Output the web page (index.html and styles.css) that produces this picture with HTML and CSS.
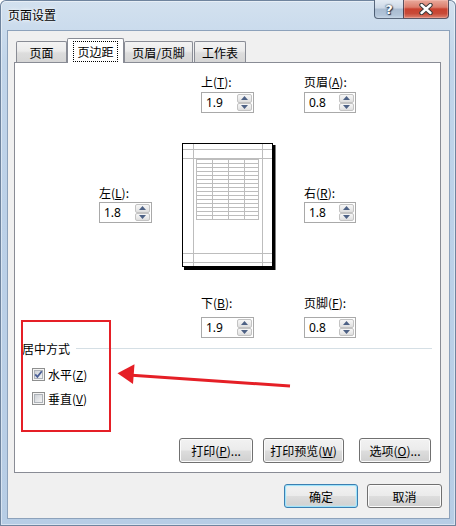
FILE: index.html
```html
<!DOCTYPE html>
<html>
<head>
<meta charset="utf-8">
<title>页面设置</title>
<link rel="stylesheet" href="styles.css">
</head>
<body>
<div class="window">
  <div class="titlebar">
    <div class="title">页面设置</div>
    <div class="caption-btns">
      <div class="cap help">?</div>
      <div class="cap close">
        <svg width="14" height="12" viewBox="0 0 14 12">
          <path d="M2.5 2 L11.5 10 M11.5 2 L2.5 10" stroke="#3b3b3b" stroke-width="4.4" stroke-linecap="round"/>
          <path d="M2.5 2 L11.5 10 M11.5 2 L2.5 10" stroke="#ffffff" stroke-width="2.4" stroke-linecap="round"/>
        </svg>
      </div>
    </div>
  </div>
  <div class="client">
    <div class="tabs">
      <div class="tab t1">页面</div>
      <div class="tab t2 active"><span class="focus">页边距</span></div>
      <div class="tab t3">页眉/页脚</div>
      <div class="tab t4">工作表</div>
    </div>
    <div class="panel">
      <div class="margins">
        <div class="field f-top">
          <div class="flabel">上(<u>T</u>):</div>
          <div class="spin"><span class="spin-val">1.9</span><span class="spin-btns"><span class="sb"><svg width="7" height="4" viewBox="0 0 7 4"><polygon points="0,4 3.5,0 7,4" fill="#4d6185"/></svg></span><span class="sb"><svg width="7" height="4" viewBox="0 0 7 4"><polygon points="0,0 3.5,4 7,0" fill="#4d6185"/></svg></span></span></div>
        </div>
        <div class="field f-header">
          <div class="flabel">页眉(<u>A</u>):</div>
          <div class="spin"><span class="spin-val">0.8</span><span class="spin-btns"><span class="sb"><svg width="7" height="4" viewBox="0 0 7 4"><polygon points="0,4 3.5,0 7,4" fill="#4d6185"/></svg></span><span class="sb"><svg width="7" height="4" viewBox="0 0 7 4"><polygon points="0,0 3.5,4 7,0" fill="#4d6185"/></svg></span></span></div>
        </div>
        <div class="field f-left">
          <div class="flabel">左(<u>L</u>):</div>
          <div class="spin"><span class="spin-val">1.8</span><span class="spin-btns"><span class="sb"><svg width="7" height="4" viewBox="0 0 7 4"><polygon points="0,4 3.5,0 7,4" fill="#4d6185"/></svg></span><span class="sb"><svg width="7" height="4" viewBox="0 0 7 4"><polygon points="0,0 3.5,4 7,0" fill="#4d6185"/></svg></span></span></div>
        </div>
        <svg class="preview" width="94" height="128" viewBox="0 0 94 128">
          <rect x="2" y="2" width="91.5" height="125" fill="#000"/>
          <rect x="0.5" y="0.5" width="90" height="123" fill="#fff" stroke="#000" stroke-width="1"/>
          <g stroke="#bdbdbd" stroke-width="1" fill="none">
            <path d="M11.5 1 V123 M80.5 1 V123 M1 6.5 H90 M1 15.5 H90 M1 110.5 H90 M1 119.5 H90"/>
            <path d="M14.5 16 V76 M30.5 16 V76 M46.5 16 V76 M62.5 16 V76 M76.5 16 V76"/>
            <path d="M14 16.5 H77 M14 20.5 H77 M14 24.5 H77 M14 28.5 H77 M14 32.5 H77 M14 36.5 H77 M14 40.5 H77 M14 44.5 H77 M14 48.5 H77 M14 52.5 H77 M14 56.5 H77 M14 60.5 H77 M14 64.5 H77 M14 68.5 H77 M14 72.5 H77 M14 76.5 H77"/>
          </g>
        </svg>
        <div class="field f-right">
          <div class="flabel">右(<u>R</u>):</div>
          <div class="spin"><span class="spin-val">1.8</span><span class="spin-btns"><span class="sb"><svg width="7" height="4" viewBox="0 0 7 4"><polygon points="0,4 3.5,0 7,4" fill="#4d6185"/></svg></span><span class="sb"><svg width="7" height="4" viewBox="0 0 7 4"><polygon points="0,0 3.5,4 7,0" fill="#4d6185"/></svg></span></span></div>
        </div>
        <div class="field f-bottom">
          <div class="flabel">下(<u>B</u>):</div>
          <div class="spin"><span class="spin-val">1.9</span><span class="spin-btns"><span class="sb"><svg width="7" height="4" viewBox="0 0 7 4"><polygon points="0,4 3.5,0 7,4" fill="#4d6185"/></svg></span><span class="sb"><svg width="7" height="4" viewBox="0 0 7 4"><polygon points="0,0 3.5,4 7,0" fill="#4d6185"/></svg></span></span></div>
        </div>
        <div class="field f-footer">
          <div class="flabel">页脚(<u>F</u>):</div>
          <div class="spin"><span class="spin-val">0.8</span><span class="spin-btns"><span class="sb"><svg width="7" height="4" viewBox="0 0 7 4"><polygon points="0,4 3.5,0 7,4" fill="#4d6185"/></svg></span><span class="sb"><svg width="7" height="4" viewBox="0 0 7 4"><polygon points="0,0 3.5,4 7,0" fill="#4d6185"/></svg></span></span></div>
        </div>
      </div>
      <div class="group">
        <div class="group-head"><span class="group-title">居中方式</span><span class="rule"></span></div>
        <div class="check c1">
          <svg class="cbox" width="13" height="13" viewBox="0 0 13 13">
            <defs><linearGradient id="cg1" x1="0" y1="0" x2="1" y2="1"><stop offset="0" stop-color="#cbcfd5"/><stop offset="1" stop-color="#f6f6f6"/></linearGradient></defs>
            <rect x="0.5" y="0.5" width="12" height="12" fill="#f4f4f4" stroke="#8e8f8f"/>
            <rect x="2.5" y="2.5" width="8" height="8" fill="url(#cg1)" stroke="#aeb3b9"/>
            <path d="M3.2 6.4 L5.4 8.8 L9.8 3.2" fill="none" stroke="#4a5f97" stroke-width="1.8"/>
          </svg>
          <span>水平(<u>Z</u>)</span>
        </div>
        <div class="check c2">
          <svg class="cbox" width="13" height="13" viewBox="0 0 13 13">
            <defs><linearGradient id="cg2" x1="0" y1="0" x2="1" y2="1"><stop offset="0" stop-color="#cbcfd5"/><stop offset="1" stop-color="#f6f6f6"/></linearGradient></defs>
            <rect x="0.5" y="0.5" width="12" height="12" fill="#f4f4f4" stroke="#8e8f8f"/>
            <rect x="2.5" y="2.5" width="8" height="8" fill="url(#cg2)" stroke="#aeb3b9"/>
          </svg>
          <span>垂直(<u>V</u>)</span>
        </div>
      </div>
      <div class="print-row">
        <button class="btn b-print">打印(<u>P</u>)...</button>
        <button class="btn b-preview">打印预览(<u>W</u>)</button>
        <button class="btn b-options">选项(<u>O</u>)...</button>
      </div>
    </div>
    <div class="dlg-row">
      <button class="btn default b-ok">确定</button>
      <button class="btn b-cancel">取消</button>
    </div>
  </div>
  <div class="annot-box"></div>
  <svg class="annot-arrow" width="456" height="526" viewBox="0 0 456 526">
    <path d="M132 375.2 L290 386" stroke="#e51f26" stroke-width="3" fill="none"/>
    <polygon points="117.5,373.3 134.5,364.3 133,384" fill="#e51f26"/>
  </svg>
</div>
</body>
</html>
```

FILE: styles.css
```css
* { box-sizing: border-box; }
html, body { margin: 0; padding: 0; }
body {
  width: 456px;
  height: 526px;
  overflow: hidden;
  font-family: "Noto Sans", "Noto Sans CJK SC", sans-serif;
  font-size: 12px;
  color: #000;
  background: #ffffff;
}
u { text-decoration: underline; text-underline-offset: 1px; }

.window {
  position: relative;
  width: 456px;
  height: 526px;
  border-radius: 6px 6px 0 0;
  background: linear-gradient(180deg, #d3e1ef 0%, #c1d5ea 12%, #bcd1e8 40%, #b7cde5 100%);
  box-shadow: inset 0 0 0 1px #6f849e, inset 0 0 0 2px rgba(255,255,255,0.45);
  overflow: hidden;
}

.titlebar {
  height: 30px;
  display: flex;
  align-items: flex-start;
  justify-content: space-between;
}
.title {
  margin-left: 8px;
  line-height: 30px;
  font-family: "Noto Sans CJK SC", sans-serif;
  font-size: 12px;
  text-shadow: 0 0 5px rgba(255,255,255,0.95), 0 0 2px rgba(255,255,255,0.9);
}
.caption-btns {
  display: flex;
  margin-right: 7px;
}
.cap {
  height: 19px;
  display: flex;
  align-items: center;
  justify-content: center;
  border: 1px solid rgba(45,60,85,0.75);
  border-top: none;
}
.help {
  width: 29px;
  border-radius: 0 0 0 4px;
  border-right: none;
  background: linear-gradient(180deg, #e3ebf4 0%, #ccd8e6 45%, #a9bbd0 50%, #b3c5d9 85%, #c7d6e6 100%);
  color: #fff;
  font-family: "DejaVu Sans", sans-serif;
  font-weight: bold;
  font-size: 13px;
  line-height: 19px;
  text-shadow: 0 0 1px #2b3a52, 0 0 2px #2b3a52, 1px 1px 1px #2b3a52;
}
.close {
  width: 46px;
  border-radius: 0 0 4px 0;
  background: linear-gradient(180deg, #e9aa9c 0%, #dc7d6c 40%, #c9412f 50%, #c84a38 75%, #dc8270 100%);
  box-shadow: inset 0 0 0 1px rgba(255,210,200,0.35);
}
.close svg { display: block; }

.client {
  margin: 0 6px 0 7px;
  height: 489px;
  background: #f0f0f0;
  border: 1px solid #8da2bb;
  padding: 7px 8px 0 6px;
}

.tabs {
  display: flex;
  align-items: flex-end;
  height: 24px;
  padding-left: 2px;
  font-family: "Noto Sans CJK SC", sans-serif;
}
.tab {
  height: 21px;
  border: 1px solid #898c95;
  border-bottom: none;
  border-radius: 2px 2px 0 0;
  background: linear-gradient(180deg, #f3f3f3 0%, #ebebeb 45%, #dddddd 55%, #d6d6d6 100%);
  display: flex;
  align-items: center;
  justify-content: center;
  line-height: 15px;
}
.t1 { width: 51px; }
.t2 { width: 57px; }
.t3 { width: 69px; }
.t4 { width: 52px; margin-left: 1px; }
.tab.active {
  height: 25px;
  margin-bottom: -1px;
  background: #ffffff;
  position: relative;
  z-index: 1;
}
.focus {
  outline: 1px dotted #000;
  outline-offset: 0;
  padding: 2px 3px 2px 3px;
  line-height: 15px;
}

.panel {
  height: 411px;
  width: 427px;
  border: 1px solid #898c95;
  background: #ffffff;
  font-family: "Noto Sans CJK SC", sans-serif;
  overflow: hidden;
}

.margins {
  display: grid;
  grid-template-columns: 83px 122px 60px;
  margin-left: 84px;
  padding-top: 11px;
  align-items: start;
}
.field { display: flex; flex-direction: column; align-items: flex-start; }
.flabel { line-height: 15px; height: 15px; white-space: nowrap; font-family: "Noto Sans CJK SC", sans-serif; }
.f-top { grid-column: 2; grid-row: 1; margin-left: 19px; }
.f-header { grid-column: 3; grid-row: 1; }
.f-top .spin, .f-header .spin { margin-top: 3px; }
.f-left { grid-column: 1; grid-row: 2; margin-top: 72px; }
.f-right { grid-column: 3; grid-row: 2; margin-top: 72px; }
.f-left .spin, .f-right .spin { margin-top: 2px; }
.preview { grid-column: 2; grid-row: 2; margin-top: 30px; display: block; }
.f-bottom { grid-column: 2; grid-row: 3; margin-left: 19px; margin-top: 24px; }
.f-footer { grid-column: 3; grid-row: 3; margin-top: 24px; }
.f-bottom .spin, .f-footer .spin { margin-top: 7px; }

.spin {
  width: 53px;
  height: 21px;
  border: 1px solid #a9a9a9;
  background: #fff;
  display: flex;
}
.f-header .spin, .f-right .spin, .f-footer .spin { width: 52px; }
.spin-val {
  flex: 1;
  padding-left: 4px;
  line-height: 19px;
  font-family: "Noto Sans", sans-serif;
  font-size: 12px;
}
.spin-btns {
  width: 16px;
  display: flex;
  flex-direction: column;
  padding: 1px 1px 1px 0;
}
.sb {
  flex: 1;
  border: 1px solid #c3c3c3;
  border-radius: 2px;
  background: linear-gradient(180deg, #f6f6f6 0%, #ececec 50%, #dedede 100%);
  display: flex;
  align-items: center;
  justify-content: center;
}
.sb svg { display: block; }

.group { margin-top: 3px; }
.group-head {
  display: flex;
  align-items: center;
  margin-left: 7px;
  margin-right: 8px;
  height: 15px;
}
.group-title { line-height: 15px; }
.rule {
  flex: 1;
  height: 1px;
  background: #d5dfe5;
  margin-left: 6px;
}
.check {
  display: flex;
  align-items: center;
  height: 13px;
  margin-left: 17px;
  gap: 3px;
  line-height: 15px;
}
.check .cbox { display: block; flex: none; }
.c1 { margin-top: 12px; }
.c2 { margin-top: 11px; }

.print-row {
  display: flex;
  margin-top: 33px;
  margin-left: 164px;
}
.btn {
  height: 25px;
  padding: 0;
  margin: 0;
  border: 1px solid #707070;
  border-radius: 3px;
  background: linear-gradient(180deg, #f2f2f2 0%, #ebebeb 48%, #dddddd 52%, #cfcfcf 100%);
  box-shadow: inset 0 0 0 1px #fbfbfb;
  font-family: "Noto Sans CJK SC", sans-serif;
  font-size: 12px;
  color: #000;
  line-height: 15px;
}
.b-print { width: 74px; }
.b-preview { width: 81px; margin-left: 10px; }
.b-options { width: 72px; margin-left: 15px; }

.dlg-row {
  display: flex;
  justify-content: flex-end;
  gap: 9px;
  margin-top: 11px;
  margin-right: -1px;
}
.dlg-row .btn { height: 24px; }
.b-ok { width: 74px; }
.b-cancel { width: 75px; }
.btn.default {
  border-color: #3c7fb1;
  box-shadow: inset 0 0 0 1px #9ee3fb, inset 0 0 2px 1px #c7eefc;
}

.annot-box {
  position: absolute;
  left: 21px;
  top: 320px;
  width: 90px;
  height: 112px;
  border: 2px solid #e51f26;
}
.annot-arrow {
  position: absolute;
  left: 0;
  top: 0;
  pointer-events: none;
}
```
